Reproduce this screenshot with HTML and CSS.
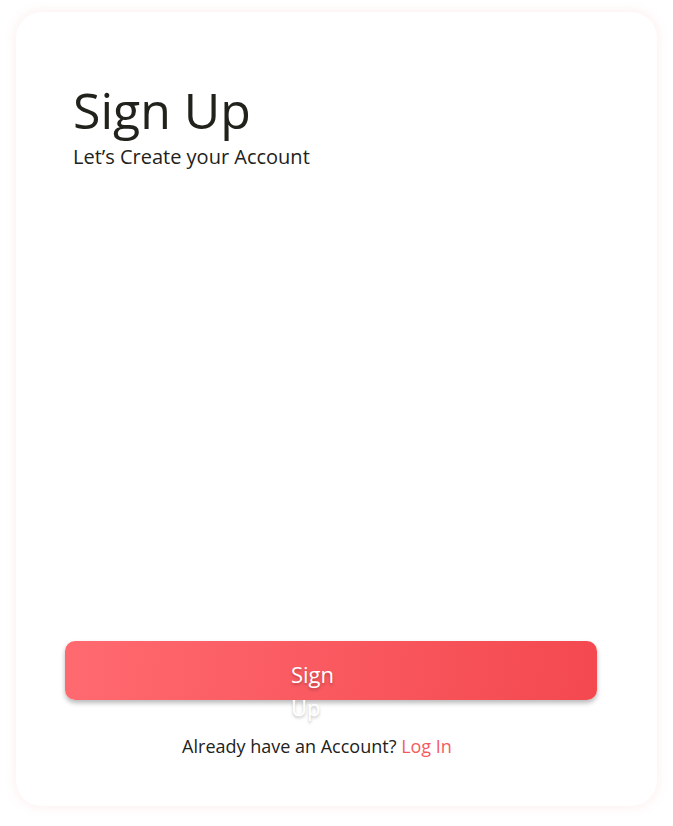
FILE: index.html
```html
<!DOCTYPE html>
<html>
<head>
<meta charset="utf-8">
<link rel="stylesheet" href="styles.css">
</head>
<body>
<div class="card">
  <div class="head">
    <h1 class="title">Sign Up</h1>
    <p class="subtitle">Let’s Create your Account</p>
  </div>
  <div class="spacer"></div>
  <button class="btn"><span class="btn-label">Sign Up</span></button>
  <p class="foot">Already have an Account? <a class="link" href="#">Log In</a></p>
</div>
</body>
</html>
```
FILE: styles.css
```css
* { box-sizing: border-box; }
html, body { margin: 0; padding: 0; background: #fff; }
body {
  font-family: "Open Sans", "Noto Sans", sans-serif;
  color: #22221c;
  padding: 12px 16px 20px 16px;
}
.card {
  width: 641px;
  height: 794px;
  border-radius: 26px;
  background: #fff;
  box-shadow: 0 0 10px 3px rgba(250, 200, 200, 0.22);
  display: flex;
  flex-direction: column;
  padding: 68px 60px 0 49px;
}
.head { padding-left: 8px; }
.title {
  margin: 0;
  font-size: 50px;
  font-weight: 400;
  line-height: 60px;
  color: #22221c;
}
.subtitle {
  margin: 4px 0 0 0;
  font-size: 20px;
  line-height: 26px;
  color: #22221c;
}
.spacer { flex: 1; }
.btn {
  height: 59px;
  width: 532px;
  border: none;
  border-radius: 10px;
  background: linear-gradient(100deg, #ff6a70 0%, #f4484f 100%);
  box-shadow: 0 3px 5px rgba(0, 0, 0, 0.28);
  display: flex;
  justify-content: center;
  align-items: flex-start;
  padding: 18px 0 0 0;
  font-family: inherit;
  overflow: visible;
}
.btn-label {
  width: 60px;
  margin-right: 20px;
  text-align: left;
  font-size: 22px;
  line-height: 33px;
  color: #fff;
  text-shadow: 0 2px 3px rgba(0, 0, 0, 0.25);
  margin-top: -1px;
}
.foot {
  margin: 34px 0 48px 0;
  padding-right: 28px;
  text-align: center;
  font-size: 18px;
  line-height: 24px;
  color: #22221c;
}
.link { color: #f55a5f; text-decoration: none; }
```
